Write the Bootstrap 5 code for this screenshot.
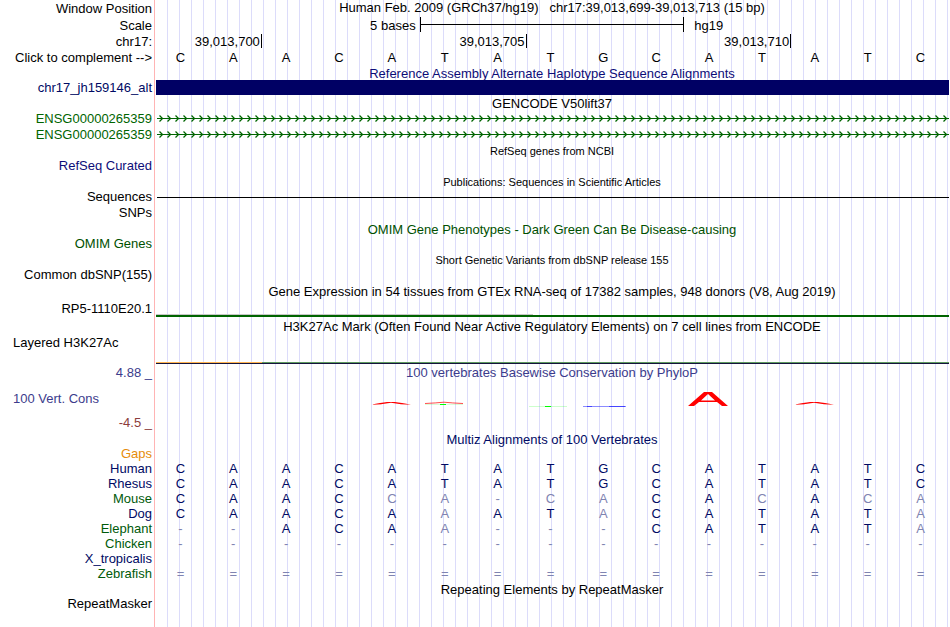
<!DOCTYPE html>
<html lang="en">
<head>
  <meta charset="UTF-8" />
  <meta name="viewport" content="width=device-width, initial-scale=1">
  <title>Genome Browser - chr17:39,013,699-39,013,713</title>
  <link href="https://cdn.jsdelivr.net/npm/bootstrap@5.3.3/dist/css/bootstrap.min.css" rel="stylesheet">
  <style>
    body { font-family: "Liberation Sans", Arial, sans-serif; font-size: 13px; line-height: 15px; color: #000; background: #fff; }

    /* white label column, pink divider, then guide lines every 12px */
    .browser {
      padding-right: 1px;
      background:
        linear-gradient(#fff, #fff) 0 0 / 154px 100% no-repeat,
        linear-gradient(#ffb4b4, #ffb4b4) 154px 0 / 1px 100% no-repeat,
        linear-gradient(#fff, #fff) 155px 0 / 10px 100% no-repeat,
        linear-gradient(90deg, #dcdcfa 1px, transparent 1px) 167px 0 / 12px 100% repeat-x;
    }
    .track { display: flex; min-height: 15px; }
    .track-label { width: 155px; flex: none; padding-right: 3px; text-align: right; white-space: nowrap; }
    .track-data { flex: 1; min-width: 0; text-align: center; white-space: nowrap; }
    .track-label:empty + .track-data { padding-top: 1px; margin-bottom: -1px; }
    .h-16 { min-height: 16px; line-height: 16px; }
    .h-17 { min-height: 17px; line-height: 17px; }
    .h-18 { min-height: 18px; line-height: 18px; }
    .left-label { text-align: left; padding-left: 13px; }
    .small-title { font-size: 11px; }

    .base-row { display: flex; margin-right: 1px; }
    .base-cell { flex: 1 1 0; padding-right: 2px; }
    .tick { border-left: 1px solid #000; height: 14px; }
    .scale-bar { border: solid #000; border-width: 0 1px; height: 15px; }
    .scale-db { padding-left: 10px; }
    .rule { height: 1px; background: #000; }
    .publication { margin-left: 2px; }
    .alt-bar { height: 15px; background: #000064; margin-left: 1px; }
    .arrows { display: block; width: 100%; height: 8px; padding-left: 2px; }
    .gtex-line { border-bottom: 2px solid #006400; margin-left: 1px; }
    .gtex-line div { height: 1px; width: 47.5%; background: #c8c8c8; }
    .mark-track { min-height: 29px; }
    .mark-line { border-bottom: 1px solid #14143c; margin-left: 1px; background: #5f9b5f; }
    .mark-line div { height: 1px; width: 13.33%; background: #ffb450; }
    .logo-row { padding: 10px 0 23px; }

    .navy { color: #0c0c78; }
    .deep { color: #000a64; }
    .green { color: #006400; }
    .omim { color: #005000; }
    .cons { color: #3c3c8c; }
    .neg { color: #8c3c3c; }
    .gaps { color: #e68c0a; }
    .near { color: #005a0a; }
    .faint { color: #7f84b1; }

    .align-table { width: calc(100% - 1px); table-layout: fixed; border-collapse: collapse; }
    .align-table th { width: 155px; padding: 0 3px 0 0; text-align: right; font-weight: normal; }
    .align-table td { padding: 0 2px 0 0; text-align: center; height: 15px; }
    .logo-cell { padding-right: 4px; }
    .logo-cell svg { display: block; margin: 0 auto; overflow: visible; }
  </style>
</head>
<body>
  <main class="browser min-vh-100">
    <div class="track h-17">
      <div class="track-label">Window Position</div>
      <div class="track-data h-16">Human Feb. 2009 (GRCh37/hg19) &nbsp; chr17:39,013,699-39,013,713 (15 bp)</div>
    </div>
    <div class="track h-17">
      <div class="track-label">Scale</div>
      <div class="track-data d-flex">
        <div class="col-4 text-end pe-1">5 bases</div>
        <div class="col-4 scale-bar d-flex align-items-center"><div class="rule w-100"></div></div>
        <div class="col-4 text-start scale-db">hg19</div>
      </div>
    </div>
    <div class="track h-16">
      <div class="track-label">chr17:</div>
      <div class="track-data d-flex text-end" id="positions"></div>
    </div>
    <div class="track">
      <div class="track-label">Click to complement --&gt;</div>
      <div class="track-data base-row" id="bases"></div>
    </div>

    <div class="track navy">
      <div class="track-label"></div>
      <div class="track-data">Reference Assembly Alternate Haplotype Sequence Alignments</div>
    </div>
    <div class="track deep">
      <div class="track-label">chr17_jh159146_alt</div>
      <div class="track-data"><div class="alt-bar"></div></div>
    </div>

    <div class="track h-16">
      <div class="track-label"></div>
      <div class="track-data">GENCODE V50lift37</div>
    </div>
    <div class="track h-16 green">
      <div class="track-label">ENSG00000265359</div>
      <div class="track-data d-flex align-items-center">
        <svg class="arrows" aria-hidden="true">
          <defs>
            <pattern id="strand" width="8" height="8" patternUnits="userSpaceOnUse">
              <path d="M0 3.5H8" stroke="#006400" />
              <path d="M2.5 .5l3 3l-3 3" fill="none" stroke="#006400" stroke-width="1.3" />
            </pattern>
          </defs>
          <rect width="100%" height="8" fill="url(#strand)" />
        </svg>
      </div>
    </div>
    <div class="track h-16 green">
      <div class="track-label">ENSG00000265359</div>
      <div class="track-data d-flex align-items-center">
        <svg class="arrows" aria-hidden="true"><rect width="100%" height="8" fill="url(#strand)" /></svg>
      </div>
    </div>

    <div class="track">
      <div class="track-label"></div>
      <div class="track-data small-title">RefSeq genes from NCBI</div>
    </div>
    <div class="track h-16 navy">
      <div class="track-label">RefSeq Curated</div>
    </div>

    <div class="track">
      <div class="track-label"></div>
      <div class="track-data small-title">Publications: Sequences in Scientific Articles</div>
    </div>
    <div class="track h-16">
      <div class="track-label">Sequences</div>
      <div class="track-data"><div class="rule publication mt-2"></div></div>
    </div>
    <div class="track h-16">
      <div class="track-label">SNPs</div>
    </div>

    <div class="track omim">
      <div class="track-label"></div>
      <div class="track-data">OMIM Gene Phenotypes - Dark Green Can Be Disease-causing</div>
    </div>
    <div class="track omim">
      <div class="track-label">OMIM Genes</div>
    </div>

    <div class="track h-16">
      <div class="track-label"></div>
      <div class="track-data small-title">Short Genetic Variants from dbSNP release 155</div>
    </div>
    <div class="track">
      <div class="track-label">Common dbSNP(155)</div>
    </div>

    <div class="track h-18">
      <div class="track-label"></div>
      <div class="track-data">Gene Expression in 54 tissues from GTEx RNA-seq of 17382 samples, 948 donors (V8, Aug 2019)</div>
    </div>
    <div class="track h-17">
      <div class="track-label">RP5-1110E20.1</div>
      <div class="track-data d-flex flex-column justify-content-end"><div class="gtex-line"><div></div></div></div>
    </div>

    <div class="track h-18">
      <div class="track-label"></div>
      <div class="track-data">H3K27Ac Mark (Often Found Near Active Regulatory Elements) on 7 cell lines from ENCODE</div>
    </div>
    <div class="track mark-track">
      <div class="track-label left-label">Layered H3K27Ac</div>
      <div class="track-data d-flex flex-column justify-content-end"><div class="mark-line"><div></div></div></div>
    </div>

    <div class="track cons">
      <div class="track-label d-flex flex-column justify-content-between">
        <div class="h-18">4.88 _</div>
        <div class="left-label">100 Vert. Cons</div>
        <div class="h-17 neg">-4.5 _</div>
      </div>
      <div class="track-data">
        <div class="h-18">100 vertebrates Basewise Conservation by PhyloP</div>
        <div class="base-row logo-row" id="logos"></div>
      </div>
    </div>

    <div class="track deep">
      <div class="track-label"></div>
      <div class="track-data">Multiz Alignments of 100 Vertebrates</div>
    </div>
    <table class="align-table deep">
      <tbody id="alignment"></tbody>
    </table>

    <div class="track">
      <div class="track-label"></div>
      <div class="track-data">Repeating Elements by RepeatMasker</div>
    </div>
    <div class="track">
      <div class="track-label">RepeatMasker</div>
    </div>
  </main>

  <script src="https://cdn.jsdelivr.net/npm/bootstrap@5.3.3/dist/js/bootstrap.bundle.min.js"></script>
  <script>
    const sequence = "CAACATATGCATATC";

    // each tick stands after the given number of bases
    const positions = [
      { bases: 2, text: "39,013,700" },
      { bases: 5, text: "39,013,705" },
      { bases: 5, text: "39,013,710" },
      { bases: 3, text: "" }
    ];

    // lower case = differs from human
    const species = [
      { name: "Gaps", color: "gaps", row: "               " },
      { name: "Human", color: "deep", row: "CAACATATGCATATC" },
      { name: "Rhesus", color: "deep", row: "CAACATATGCATATC" },
      { name: "Mouse", color: "near", row: "CAACca-caCAcAca" },
      { name: "Dog", color: "deep", row: "CAACAaATaCATATa" },
      { name: "Elephant", color: "near", row: "--ACAa---CATATa" },
      { name: "Chicken", color: "near", row: "---------------" },
      { name: "X_tropicalis", color: "deep", row: "               " },
      { name: "Zebrafish", color: "near", row: "===============" }
    ];

    // drawings of the conservation scores, by base index
    const lowArc = '<path d="M0 12.8Q10 12.6 20 10.8Q30 12.6 40 12.8Q30 10.8 24 10H16Q10 10.8 0 12.8Z" fill="#f00" />';
    const logos = {
      4: lowArc,
      5: '<path d="M1 11.5Q12 11 20 10.2Q28 11 39 11.5" fill="none" stroke="#f00" stroke-opacity=".7" /><path d="M1 12.5H39" stroke="#0f0" stroke-opacity=".15" /><path d="M16 12.5h6" stroke="#0f0" />',
      7: '<path d="M0 14.5H38" stroke="#0f0" stroke-opacity=".2" /><path d="M16 14.5h6" stroke="#0f0" />',
      8: '<path d="M1 14.5H44" stroke="#00f" stroke-opacity=".45" /><path d="M5 14.5h5M27 14.5h16" stroke="#00f" stroke-opacity=".5" />',
      10: '<path d="M0 14L16 0H24L40 14H34L29 10H11L6 14ZM13 8.5H27L20 2Z" fill="#f00" fill-rule="evenodd" />',
      12: lowArc
    };

    document.getElementById("positions").innerHTML = positions.map((p, i) =>
      `<div class="${i ? 'tick' : ''}" style="width: ${p.bases / 15 * 100}%; padding-right: 1px">${p.text}</div>`
    ).join('');

    document.getElementById("bases").innerHTML = [...sequence].map(b =>
      `<div class="base-cell">${b}</div>`
    ).join('');

    document.getElementById("logos").innerHTML = [...sequence].map((b, i) =>
      `<div class="base-cell logo-cell"><svg width="40" height="16" aria-hidden="true">${logos[i] || ''}</svg></div>`
    ).join('');

    document.getElementById("alignment").innerHTML = species.map(s => `
      <tr>
        <th scope="row" class="${s.color}">${s.name}</th>
        ${[...s.row].map(b => `<td class="${/[A-Z]/.test(b) ? '' : 'faint'}">${b.toUpperCase()}</td>`).join('')}
      </tr>
    `).join('');
  </script>
</body>
</html>
